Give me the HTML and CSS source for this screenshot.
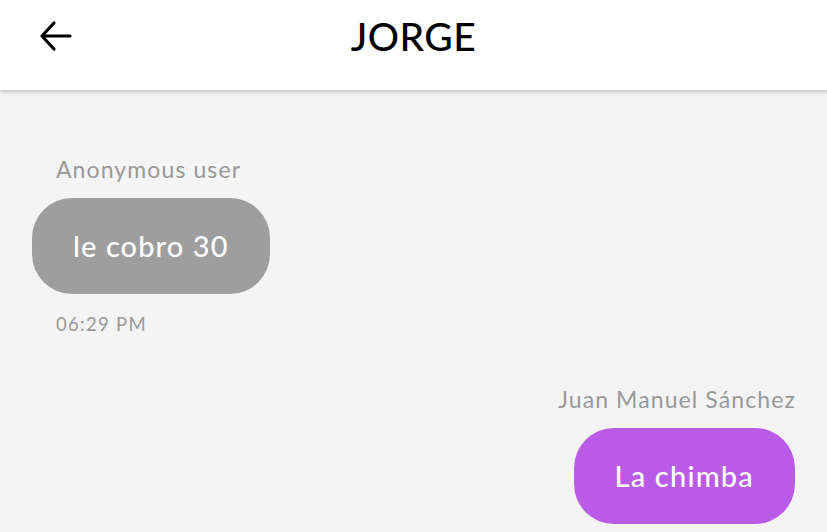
FILE: index.html
```html
<!DOCTYPE html>
<html>
<head>
    <title>Chat - JORGE</title>
    <link rel="stylesheet" href="styles.css">
</head>
<body>
    <header class="topbar">
        <button class="back" aria-label="Back">
            <svg width="34" height="32" viewBox="0 0 34 32" fill="none" stroke="#000" stroke-width="3.2" stroke-linecap="round" stroke-linejoin="round">
                <path d="M31 16H3M15 3L3 16l12 13"/>
            </svg>
        </button>
        <h1 class="title">JORGE</h1>
    </header>

    <main class="chat">
        <div class="msg incoming">
            <div class="author">Anonymous user</div>
            <div class="bubble">le cobro 30</div>
            <div class="time">06:29 PM</div>
        </div>

        <div class="msg outgoing">
            <div class="author">Juan Manuel Sánchez</div>
            <div class="bubble">La chimba</div>
        </div>
    </main>
</body>
</html>
```

FILE: styles.css
```css
body { margin: 0; background: #f4f4f4; font-family: Lato, "Open Sans", sans-serif; overflow: hidden; }

.topbar { position: relative; height: 90px; background: #fff; box-shadow: 0 2px 4px rgba(0,0,0,0.22); display: flex; align-items: flex-start; }
.back { position: absolute; left: 39px; top: 20px; padding: 0; border: none; background: none; display: flex; }
.title { flex: 1; margin: 0; padding-top: 12px; text-align: center; font-size: 39px; font-weight: 500; line-height: 48px; letter-spacing: 0.5px; color: #000; }

.chat { display: flex; flex-direction: column; padding: 64px 32px 0; }
.msg { display: flex; flex-direction: column; }
.incoming { align-items: flex-start; }
.outgoing { align-items: flex-end; margin-top: 48px; }

.author { color: #999; font-size: 23px; line-height: 30px; letter-spacing: 1.1px; padding: 0 24px; margin-bottom: 14px; }
.outgoing .author { padding: 0; margin-right: -1px; }
.bubble { color: #fff; font-size: 29px; font-weight: 500; line-height: 96px; letter-spacing: 1.1px; padding: 0 41px; border-radius: 40px; }
.incoming .bubble { background: #9e9e9e; }
.outgoing .bubble { background: #bb5ce9; letter-spacing: 1.2px; }
.time { color: #999; font-size: 18.5px; line-height: 24px; letter-spacing: 1.3px; padding: 0 24px; margin-top: 18px; }
```
